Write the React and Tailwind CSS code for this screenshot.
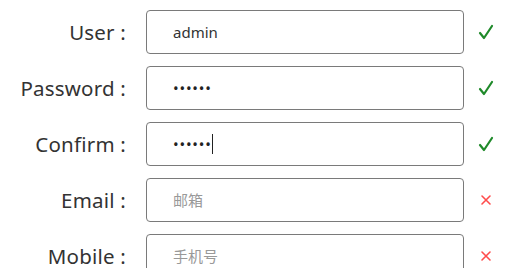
import React from 'react'

const FONT = { fontFamily: '"Noto Sans", "Noto Sans CJK SC", sans-serif' }

const rows = [
  { label: 'User', value: 'admin', ok: true },
  { label: 'Password', value: '••••••', ok: true },
  { label: 'Confirm', value: '••••••', ok: true, caret: true },
  { label: 'Email', placeholder: '邮箱', ok: false },
  { label: 'Mobile', placeholder: '手机号', ok: false },
]

function Check() {
  return (
    <svg width="16" height="16" viewBox="0 0 16 16">
      <path d="M2 9 L6 14 L14 2" fill="none" stroke="#1f8a2a" strokeWidth="2.2" strokeLinecap="round" strokeLinejoin="round" />
    </svg>
  )
}

function Cross() {
  return (
    <svg width="12" height="12" viewBox="0 0 12 12">
      <path d="M2 2 L10 10 M10 2 L2 10" fill="none" stroke="#ff4b4b" strokeWidth="1.6" strokeLinecap="round" />
    </svg>
  )
}

export default function App() {
  return (
    <div className="w-[506px] h-[268px] overflow-hidden bg-white pt-[10px] flex flex-col gap-[12px]" style={FONT}>
      {rows.map((r) => (
        <div key={r.label} className="flex items-center h-[44px] shrink-0">
          <div className="w-[127px] text-right text-[20.5px] tracking-[0.2px] text-[#333] pr-[1px]">{r.label} :</div>
          <div className="ml-[19px] w-[318px] h-[44px] border-[1.5px] border-[#7a7a7a] rounded-[4px] flex items-center pl-[26px] text-[15px]">
            {r.value ? (
              <span className={r.value === 'admin' ? 'text-[#333]' : 'text-[#222] tracking-[0.8px] text-[15px]'}>{r.value}</span>
            ) : (
              <span className="text-[#999]">{r.placeholder}</span>
            )}
            {r.caret && <span className="w-[1px] h-[20px] bg-[#222]" />}
          </div>
          <div className="ml-[14px] w-[16px] flex justify-center">{r.ok ? <Check /> : <Cross />}</div>
        </div>
      ))}
    </div>
  )
}
